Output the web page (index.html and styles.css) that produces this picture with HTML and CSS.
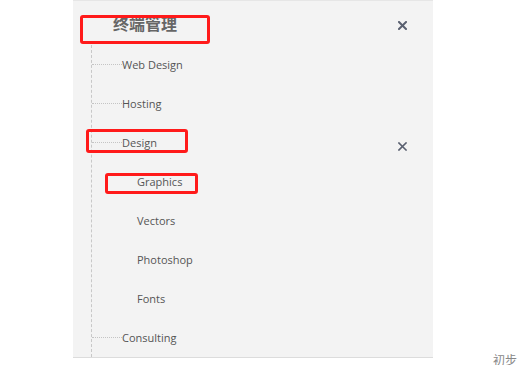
FILE: index.html
```html
<!DOCTYPE html>
<html lang="zh-CN">
<head>
    <meta charset="UTF-8">
    <meta name="viewport" content="width=device-width, initial-scale=1.0">
    <title>终端管理</title>
    <link rel="stylesheet" href="styles.css">
</head>
<body>

<div class="page">
    <div class="panel">
        <div class="panel-header">
            <span class="panel-title">终端管理</span>
            <svg class="close" width="9" height="9" viewBox="0 0 9 9"><path d="M1 1L8 8M8 1L1 8" stroke="#5a6070" stroke-width="2" stroke-linecap="square"/></svg>
        </div>

        <ul class="tree">
            <li class="node">Web Design</li>
            <li class="node">Hosting</li>
            <li class="node">
                <div class="node-row">
                    <span>Design</span>
                    <svg class="close" width="9" height="9" viewBox="0 0 9 9"><path d="M1 1L8 8M8 1L1 8" stroke="#5a6070" stroke-width="1.6" stroke-linecap="square"/></svg>
                </div>
                <ul class="sub-tree">
                    <li>Graphics</li>
                    <li>Vectors</li>
                    <li>Photoshop</li>
                    <li>Fonts</li>
                </ul>
            </li>
            <li class="node">Consulting</li>
        </ul>

        <!-- annotation boxes drawn over the screenshot -->
        <div class="mark mark-title"></div>
        <div class="mark mark-design"></div>
        <div class="mark mark-graphics"></div>
    </div>

    <div class="side-note">初步</div>
</div>

</body>
</html>
```

FILE: styles.css
```css
html, body {
    margin: 0;
    height: 365px;
    overflow: hidden;
    background: #fff;
}
body {
    font-family: "Open Sans", "Noto Sans", "Noto Sans CJK SC", sans-serif;
    color: #555;
}
.page {
    display: flex;
    align-items: flex-start;
}
.panel {
    position: relative;
    margin-left: 73px;
    width: 360px;
    height: 356px;
    background: #f3f3f3;
    border-top: 1px solid #e6e6e6;
    border-bottom: 1px solid #dcdcdc;
}
.panel-header {
    display: flex;
    align-items: center;
    justify-content: space-between;
    height: 44px;
    padding: 0 26px 0 40px;
}
.panel-title {
    font-family: "Noto Sans CJK SC", sans-serif;
    font-size: 16px;
    font-weight: bold;
    color: #666;
    margin-top: -1px;
}
.close {
    display: block;
    margin-top: 4px;
}
.tree {
    list-style: none;
    margin: 0 0 0 18px;
    padding: 0;
    border-left: 1px dashed #c8c8c8;
}
.tree li {
    font-size: 11px;
    line-height: 39px;
}
.node {
    position: relative;
    padding-left: 30px;
}
.node::before {
    content: "";
    position: absolute;
    left: 0;
    top: 19px;
    width: 30px;
    border-top: 1px dotted #c4c4c4;
}
.node-row {
    display: flex;
    align-items: center;
    justify-content: space-between;
    padding-right: 26px;
}
.node-row .close {
    margin-top: 7px;
}
.sub-tree {
    list-style: none;
    margin: 0 0 0 -30px;
    padding: 0 0 0 45px;
}
.mark {
    position: absolute;
    border: 3px solid #ff1a1a;
    border-radius: 3px;
}
.mark-title {
    left: 7px;
    top: 14px;
    width: 124px;
    height: 23px;
}
.mark-design {
    left: 13px;
    top: 128px;
    width: 96px;
    height: 18px;
}
.mark-graphics {
    left: 32px;
    top: 172px;
    width: 87px;
    height: 15px;
}
.side-note {
    margin: 353px 0 0 60px;
    font-size: 12px;
    line-height: 16px;
    color: #888;
}
```
